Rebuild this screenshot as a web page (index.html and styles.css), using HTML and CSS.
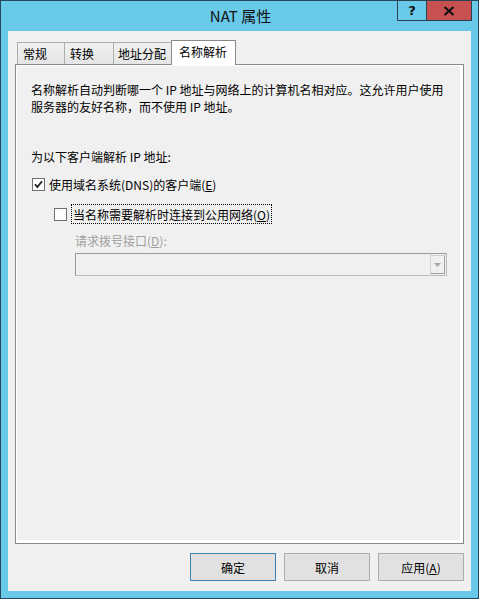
FILE: index.html
```html
<!DOCTYPE html>
<html>
<head>
<meta charset="utf-8">
<link rel="stylesheet" href="styles.css">
</head>
<body>
<div class="window">
  <div class="titlebar">
    <span class="title">NAT 属性</span>
    <div class="caption">
      <div class="cap help">?</div>
      <div class="cap close">
        <svg width="12" height="10" viewBox="0 0 12 10"><path d="M1.5 1 L10.5 9 M10.5 1 L1.5 9" stroke="#111" stroke-width="2.2" fill="none"/></svg>
      </div>
    </div>
  </div>
  <div class="client">
    <div class="tabs">
      <div class="tab t1">常规</div>
      <div class="tab t2">转换</div>
      <div class="tab t3">地址分配</div>
      <div class="tab active">名称解析</div>
    </div>
    <div class="panel">
      <div class="page">
        <p class="desc">名称解析自动判断哪一个 IP 地址与网络上的计算机名相对应。这允许用户使用<br>服务器的友好名称，而不使用 IP 地址。</p>
        <p class="prompt">为以下客户端解析 IP 地址:</p>
        <div class="row row1">
          <span class="box checked">
            <svg width="11" height="11" viewBox="0 0 11 11"><path d="M2 5.2 L4.3 8 L9 2.2" stroke="#222" stroke-width="1.8" fill="none"/></svg>
          </span>
          <span class="lbl">使用域名系统(DNS)的客户端(<u>E</u>)</span>
        </div>
        <div class="row row2">
          <span class="box"></span>
          <span class="lbl focus">当名称需要解析时连接到公用网络(<u>O</u>)</span>
        </div>
        <p class="disabled-lbl">请求拨号接口(<u>D</u>):</p>
        <div class="combo">
          <div class="combo-btn">
            <svg width="7" height="4" viewBox="0 0 7 4"><path d="M0 0 H7 L3.5 4 Z" fill="#a8a8a8"/></svg>
          </div>
        </div>
      </div>
    </div>
    <div class="actions">
      <div class="btn default">确定</div>
      <div class="btn">取消</div>
      <div class="btn">应用(<u>A</u>)</div>
    </div>
  </div>
</div>
</body>
</html>
```
FILE: styles.css
```css
html, body {
  margin: 0;
  padding: 0;
}
body {
  font-family: "Noto Sans CJK SC", "Microsoft YaHei", sans-serif;
  font-size: 12px;
  color: #000;
}
.window {
  position: relative;
  width: 479px;
  height: 599px;
  box-sizing: border-box;
  border: 1px solid #23495a;
  background: #69c9e8;
  display: flex;
  flex-direction: column;
  padding: 0 7px 7px 7px;
}
.titlebar {
  height: 30px;
  display: flex;
  align-items: center;
  justify-content: center;
}
.title {
  font-size: 15px;
  color: #111;
  margin-top: -1px;
  margin-left: 2px;
}
.caption {
  position: absolute;
  top: -1px;
  right: 6px;
  display: flex;
}
.cap {
  height: 21px;
  box-sizing: border-box;
  border: 1px solid #2b4250;
  display: flex;
  align-items: center;
  justify-content: center;
}
.help {
  width: 29px;
  background: #69c9e8;
  font-family: "DejaVu Sans", sans-serif;
  font-weight: bold;
  font-size: 13px;
  color: #111;
  border-right: none;
}
.close {
  width: 46px;
  background: #c75050;
}
.client {
  flex: 1;
  background: #f0f0f0;
  display: flex;
  flex-direction: column;
  padding: 0 7px 10px 7px;
}
.tabs {
  margin-top: 9px;
  height: 24px;
  display: flex;
  align-items: flex-end;
  padding-left: 2px;
}
.tab {
  height: 22px;
  box-sizing: border-box;
  border: 1px solid #acacac;
  border-bottom: none;
  background: linear-gradient(#f0f0f0, #e5e5e5);
  display: flex;
  align-items: center;
  line-height: 1;
}
.t1 { width: 48px; padding-left: 5px; }
.t2 { width: 49px; padding-left: 5px; border-left: none; }
.t3 { width: 58px; padding-left: 4px; border-left: none; }
.tab.active {
  position: relative;
  z-index: 1;
  width: 65px;
  height: 25px;
  margin-left: -1px;
  margin-bottom: -1px;
  padding-left: 7px;
  padding-bottom: 3px;
  background: #fff;
  border-color: #898989;
}
.panel {
  flex: 1;
  border: 1px solid #898989;
  background: #fff;
  display: flex;
}
.page {
  flex: 1;
  margin: 1px 3px 3px 1px;
  background: #f0f0f0;
  padding: 15px 0 0 14px;
}
p {
  margin: 0;
}
.desc {
  line-height: 17px;
}
.prompt {
  margin-top: 33px;
  line-height: 17px;
}
.row {
  display: flex;
  align-items: center;
}
.row1 {
  margin-top: 11px;
  height: 17px;
  padding-left: 1px;
}
.row2 {
  margin-top: 11px;
  height: 20px;
  padding-left: 23px;
}
.box {
  width: 13px;
  height: 13px;
  box-sizing: border-box;
  border: 1px solid #707070;
  background: #fff;
  display: flex;
  align-items: center;
  justify-content: center;
}
.row1 .lbl {
  margin-left: 4px;
}
.row2 .lbl {
  margin-left: 4px;
}
.focus {
  border: 1px dotted #000;
  height: 20px;
  box-sizing: border-box;
  padding: 0 1px;
  display: flex;
  align-items: center;
}
u {
  text-decoration: underline;
  text-underline-offset: 1px;
}
.disabled-lbl {
  margin-top: 8px;
  margin-left: 44px;
  line-height: 17px;
  color: #a0a0a0;
}
.combo {
  margin-top: 4px;
  margin-left: 44px;
  width: 372px;
  height: 23px;
  box-sizing: border-box;
  border: 1px solid #bcbcbc;
  border-top-color: #9a9a9a;
  border-left-color: #9a9a9a;
  background: #f0f0f0;
  display: flex;
  justify-content: flex-end;
  align-items: stretch;
  padding: 1px;
}
.combo-btn {
  width: 15px;
  box-sizing: border-box;
  border: 1px solid #d0d0d0;
  border-right-color: #a0a0a0;
  border-bottom-color: #a0a0a0;
  display: flex;
  align-items: center;
  justify-content: center;
}
.actions {
  margin-top: 9px;
  height: 28px;
  display: flex;
  justify-content: flex-end;
  gap: 8px;
}
.btn {
  width: 86px;
  box-sizing: border-box;
  border: 1px solid #adadad;
  background: #e1e1e1;
  display: flex;
  align-items: center;
  justify-content: center;
}
.btn.default {
  border-color: #3c7fb1;
}
```
